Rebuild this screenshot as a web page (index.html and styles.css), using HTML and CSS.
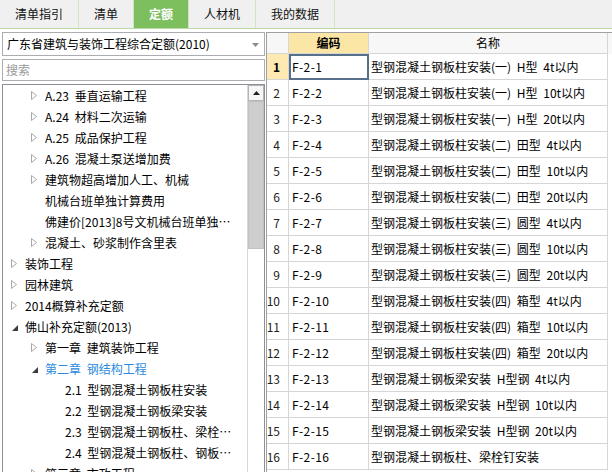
FILE: index.html
```html
<!DOCTYPE html>
<html lang="zh-CN">
<head>
<meta charset="utf-8">
<title>定额</title>
<link rel="stylesheet" href="styles.css">
</head>
<body>
<div class="tabs">
  <div class="tab">清单指引</div>
  <div class="tab">清单</div>
  <div class="tab active">定额</div>
  <div class="tab">人材机</div>
  <div class="tab">我的数据</div>
</div>
<div class="main">
  <div class="left">
    <div class="select">
      <span>广东省建筑与装饰工程综合定额(2010)</span>
      <svg class="caret" width="7" height="4" viewBox="0 0 7 4"><polygon points="0,0 7,0 3.5,4" fill="#8a8a8a"/></svg>
    </div>
    <div class="search">搜索</div>
    <div class="tree">
      <div class="tree-list">
        <div class="node l2"><span class="tw"><svg width="6" height="9" viewBox="0 0 6 9"><polygon points="0.5,0.5 5.5,4.5 0.5,8.5" fill="#fff" stroke="#a8a8a8"/></svg></span><span>A.23 垂直运输工程</span></div>
        <div class="node l2"><span class="tw"><svg width="6" height="9" viewBox="0 0 6 9"><polygon points="0.5,0.5 5.5,4.5 0.5,8.5" fill="#fff" stroke="#a8a8a8"/></svg></span><span>A.24 材料二次运输</span></div>
        <div class="node l2"><span class="tw"><svg width="6" height="9" viewBox="0 0 6 9"><polygon points="0.5,0.5 5.5,4.5 0.5,8.5" fill="#fff" stroke="#a8a8a8"/></svg></span><span>A.25 成品保护工程</span></div>
        <div class="node l2"><span class="tw"><svg width="6" height="9" viewBox="0 0 6 9"><polygon points="0.5,0.5 5.5,4.5 0.5,8.5" fill="#fff" stroke="#a8a8a8"/></svg></span><span>A.26 混凝土泵送增加费</span></div>
        <div class="node l2"><span class="tw"><svg width="6" height="9" viewBox="0 0 6 9"><polygon points="0.5,0.5 5.5,4.5 0.5,8.5" fill="#fff" stroke="#a8a8a8"/></svg></span><span>建筑物超高增加人工、机械</span></div>
        <div class="node l2"><span class="tw"></span><span>机械台班单独计算费用</span></div>
        <div class="node l2"><span class="tw"></span><span>佛建价[2013]8号文机械台班单独…</span></div>
        <div class="node l2"><span class="tw"><svg width="6" height="9" viewBox="0 0 6 9"><polygon points="0.5,0.5 5.5,4.5 0.5,8.5" fill="#fff" stroke="#a8a8a8"/></svg></span><span>混凝土、砂浆制作含里表</span></div>
        <div class="node l1"><span class="tw"><svg width="6" height="9" viewBox="0 0 6 9"><polygon points="0.5,0.5 5.5,4.5 0.5,8.5" fill="#fff" stroke="#a8a8a8"/></svg></span><span>装饰工程</span></div>
        <div class="node l1"><span class="tw"><svg width="6" height="9" viewBox="0 0 6 9"><polygon points="0.5,0.5 5.5,4.5 0.5,8.5" fill="#fff" stroke="#a8a8a8"/></svg></span><span>园林建筑</span></div>
        <div class="node l1"><span class="tw"><svg width="6" height="9" viewBox="0 0 6 9"><polygon points="0.5,0.5 5.5,4.5 0.5,8.5" fill="#fff" stroke="#a8a8a8"/></svg></span><span>2014概算补充定额</span></div>
        <div class="node l1"><span class="tw"><svg class="open" width="6" height="6" viewBox="0 0 6 6"><polygon points="6,0 6,6 0,6" fill="#3c3c3c"/></svg></span><span>佛山补充定额(2013)</span></div>
        <div class="node l2"><span class="tw"><svg width="6" height="9" viewBox="0 0 6 9"><polygon points="0.5,0.5 5.5,4.5 0.5,8.5" fill="#fff" stroke="#a8a8a8"/></svg></span><span>第一章 建筑装饰工程</span></div>
        <div class="node l2 current"><span class="tw"><svg class="open" width="6" height="6" viewBox="0 0 6 6"><polygon points="6,0 6,6 0,6" fill="#3c3c3c"/></svg></span><span>第二章 钢结构工程</span></div>
        <div class="node l3"><span class="tw"></span><span>2.1 型钢混凝土钢板柱安装</span></div>
        <div class="node l3"><span class="tw"></span><span>2.2 型钢混凝土钢板梁安装</span></div>
        <div class="node l3"><span class="tw"></span><span>2.3 型钢混凝土钢板柱、梁栓…</span></div>
        <div class="node l3"><span class="tw"></span><span>2.4 型钢混凝土钢板柱、钢板…</span></div>
        <div class="node l2"><span class="tw"><svg width="6" height="9" viewBox="0 0 6 9"><polygon points="0.5,0.5 5.5,4.5 0.5,8.5" fill="#fff" stroke="#a8a8a8"/></svg></span><span>第三章 市政工程</span></div>
      </div>
      <div class="vscroll">
        <div class="sb-up"><svg width="7" height="4" viewBox="0 0 7 4"><polygon points="3.5,0 7,4 0,4" fill="#222"/></svg></div>
        <div class="sb-thumb"></div>
        <div class="sb-track"></div>
      </div>
    </div>
  </div>
  <div class="right">
    <div class="grid-row head">
      <div class="cell num"></div>
      <div class="cell code hl">编码</div>
      <div class="cell name">名称</div>
    </div>
    <div class="grid-row"><div class="cell num first">1</div><div class="cell code sel">F-2-1</div><div class="cell name">型钢混凝土钢板柱安装(一) H型 4t以内</div></div>
    <div class="grid-row"><div class="cell num">2</div><div class="cell code">F-2-2</div><div class="cell name">型钢混凝土钢板柱安装(一) H型 10t以内</div></div>
    <div class="grid-row"><div class="cell num">3</div><div class="cell code">F-2-3</div><div class="cell name">型钢混凝土钢板柱安装(一) H型 20t以内</div></div>
    <div class="grid-row"><div class="cell num">4</div><div class="cell code">F-2-4</div><div class="cell name">型钢混凝土钢板柱安装(二) 田型 4t以内</div></div>
    <div class="grid-row"><div class="cell num">5</div><div class="cell code">F-2-5</div><div class="cell name">型钢混凝土钢板柱安装(二) 田型 10t以内</div></div>
    <div class="grid-row"><div class="cell num">6</div><div class="cell code">F-2-6</div><div class="cell name">型钢混凝土钢板柱安装(二) 田型 20t以内</div></div>
    <div class="grid-row"><div class="cell num">7</div><div class="cell code">F-2-7</div><div class="cell name">型钢混凝土钢板柱安装(三) 圆型 4t以内</div></div>
    <div class="grid-row"><div class="cell num">8</div><div class="cell code">F-2-8</div><div class="cell name">型钢混凝土钢板柱安装(三) 圆型 10t以内</div></div>
    <div class="grid-row"><div class="cell num">9</div><div class="cell code">F-2-9</div><div class="cell name">型钢混凝土钢板柱安装(三) 圆型 20t以内</div></div>
    <div class="grid-row"><div class="cell num">10</div><div class="cell code">F-2-10</div><div class="cell name">型钢混凝土钢板柱安装(四) 箱型 4t以内</div></div>
    <div class="grid-row"><div class="cell num">11</div><div class="cell code">F-2-11</div><div class="cell name">型钢混凝土钢板柱安装(四) 箱型 10t以内</div></div>
    <div class="grid-row"><div class="cell num">12</div><div class="cell code">F-2-12</div><div class="cell name">型钢混凝土钢板柱安装(四) 箱型 20t以内</div></div>
    <div class="grid-row"><div class="cell num">13</div><div class="cell code">F-2-13</div><div class="cell name">型钢混凝土钢板梁安装 H型钢 4t以内</div></div>
    <div class="grid-row"><div class="cell num">14</div><div class="cell code">F-2-14</div><div class="cell name">型钢混凝土钢板梁安装 H型钢 10t以内</div></div>
    <div class="grid-row"><div class="cell num">15</div><div class="cell code">F-2-15</div><div class="cell name">型钢混凝土钢板梁安装 H型钢 20t以内</div></div>
    <div class="grid-row"><div class="cell num">16</div><div class="cell code">F-2-16</div><div class="cell name">型钢混凝土钢板柱、梁栓钉安装</div></div>
  </div>
</div>
</body>
</html>
```
FILE: styles.css
```css
* { box-sizing: border-box; }
html, body { margin: 0; padding: 0; }
body {
  width: 612px;
  height: 472px;
  overflow: hidden;
  background: #fff;
  color: #000;
  font-family: "Noto Sans CJK SC", sans-serif;
  font-size: 12px;
  line-height: 1;
}

/* tabs */
.tabs {
  display: flex;
  height: 29px;
  background: #f0f0f0;
  border-bottom: 1px solid #b9dca5;
}
.tab {
  display: flex;
  align-items: center;
  justify-content: center;
  padding: 0 15px;
  border-right: 1px solid #cfe6c1;
  font-size: 12px;
  color: #111;
}
.tab.active {
  background: #7dbf5f;
  color: #fff;
  font-weight: bold;
}

/* main */
.main {
  display: flex;
  padding-top: 3px;
  height: 443px;
  overflow: hidden;
}
.left {
  width: 265px;
  flex: none;
  padding-left: 2px;
  display: flex;
  flex-direction: column;
}
.select {
  flex: none;
  height: 24px;
  border: 1px solid #abadb3;
  display: flex;
  align-items: center;
  justify-content: space-between;
  padding: 0 5px 0 4px;
}
.caret { margin-top: 1px; }
.search {
  flex: none;
  height: 22px;
  margin-top: 3px;
  border: 1px solid #abadb3;
  display: flex;
  align-items: center;
  padding-left: 3px;
  color: #9a9a9a;
}
.tree {
  margin-top: 3px;
  height: 420px;
  flex: none;
  border: 1px solid #8c8f96;
  display: flex;
  overflow: hidden;
}
.tree-list {
  flex: 1;
  overflow: hidden;
}
.node {
  height: 21px;
  display: flex;
  align-items: center;
  white-space: nowrap;
  word-spacing: 3px;
}
.node.l1 { padding-left: 8px; }
.node.l2 { padding-left: 28px; }
.node.l3 { padding-left: 48px; }
.tw {
  width: 14px;
  flex: none;
  display: flex;
  align-items: center;
}
.tw svg { display: block; }
.tw .open { margin-left: 1px; margin-top: 2px; }
.node.current { color: #2b8ae0; }

.vscroll {
  width: 17px;
  flex: none;
  display: flex;
  flex-direction: column;
  border-left: 1px solid #d8d8d8;
}
.sb-up {
  flex: none;
  height: 16px;
  border: 1px solid #b5b5b5;
  background: #f7f7f7;
  display: flex;
  align-items: center;
  justify-content: center;
}
.sb-up svg { display: block; }
.sb-thumb {
  flex: none;
  height: 148px;
  background: #cdcdcd;
  border: 1px solid #c2c2c2;
}
.sb-track { flex: 1; background: #fff; }

/* grid */
.right {
  flex: 1;
  margin-left: 1px;
  border-left: 1px solid #a0a0a0;
  border-top: 1px solid #a0a0a0;
}
.grid-row {
  display: grid;
  grid-template-columns: 22px 80px 239px;
  height: 26px;
}
.grid-row.head { height: 21px; background: #f7f7f7; }
.cell {
  display: flex;
  align-items: center;
  border-right: 1px solid #d6d6d6;
  border-bottom: 1px solid #d6d6d6;
  white-space: nowrap;
  overflow: hidden;
}
.cell.num {
  justify-content: flex-end;
  padding-right: 8px;
  color: #222;
}
.cell.num.first {
  background: #fde9b1;
  font-weight: bold;
  color: #000;
}
.cell.code { padding-left: 3px; letter-spacing: 0.4px; }
.cell.name { padding-left: 2px; word-spacing: 3px; }
.head .cell { justify-content: center; padding: 0; letter-spacing: 0; }
.head .cell.hl {
  background: #fce6a6;
  font-weight: bold;
}
.cell.sel {
  outline: 2px solid #56708a;
  outline-offset: -2px;
}
```
